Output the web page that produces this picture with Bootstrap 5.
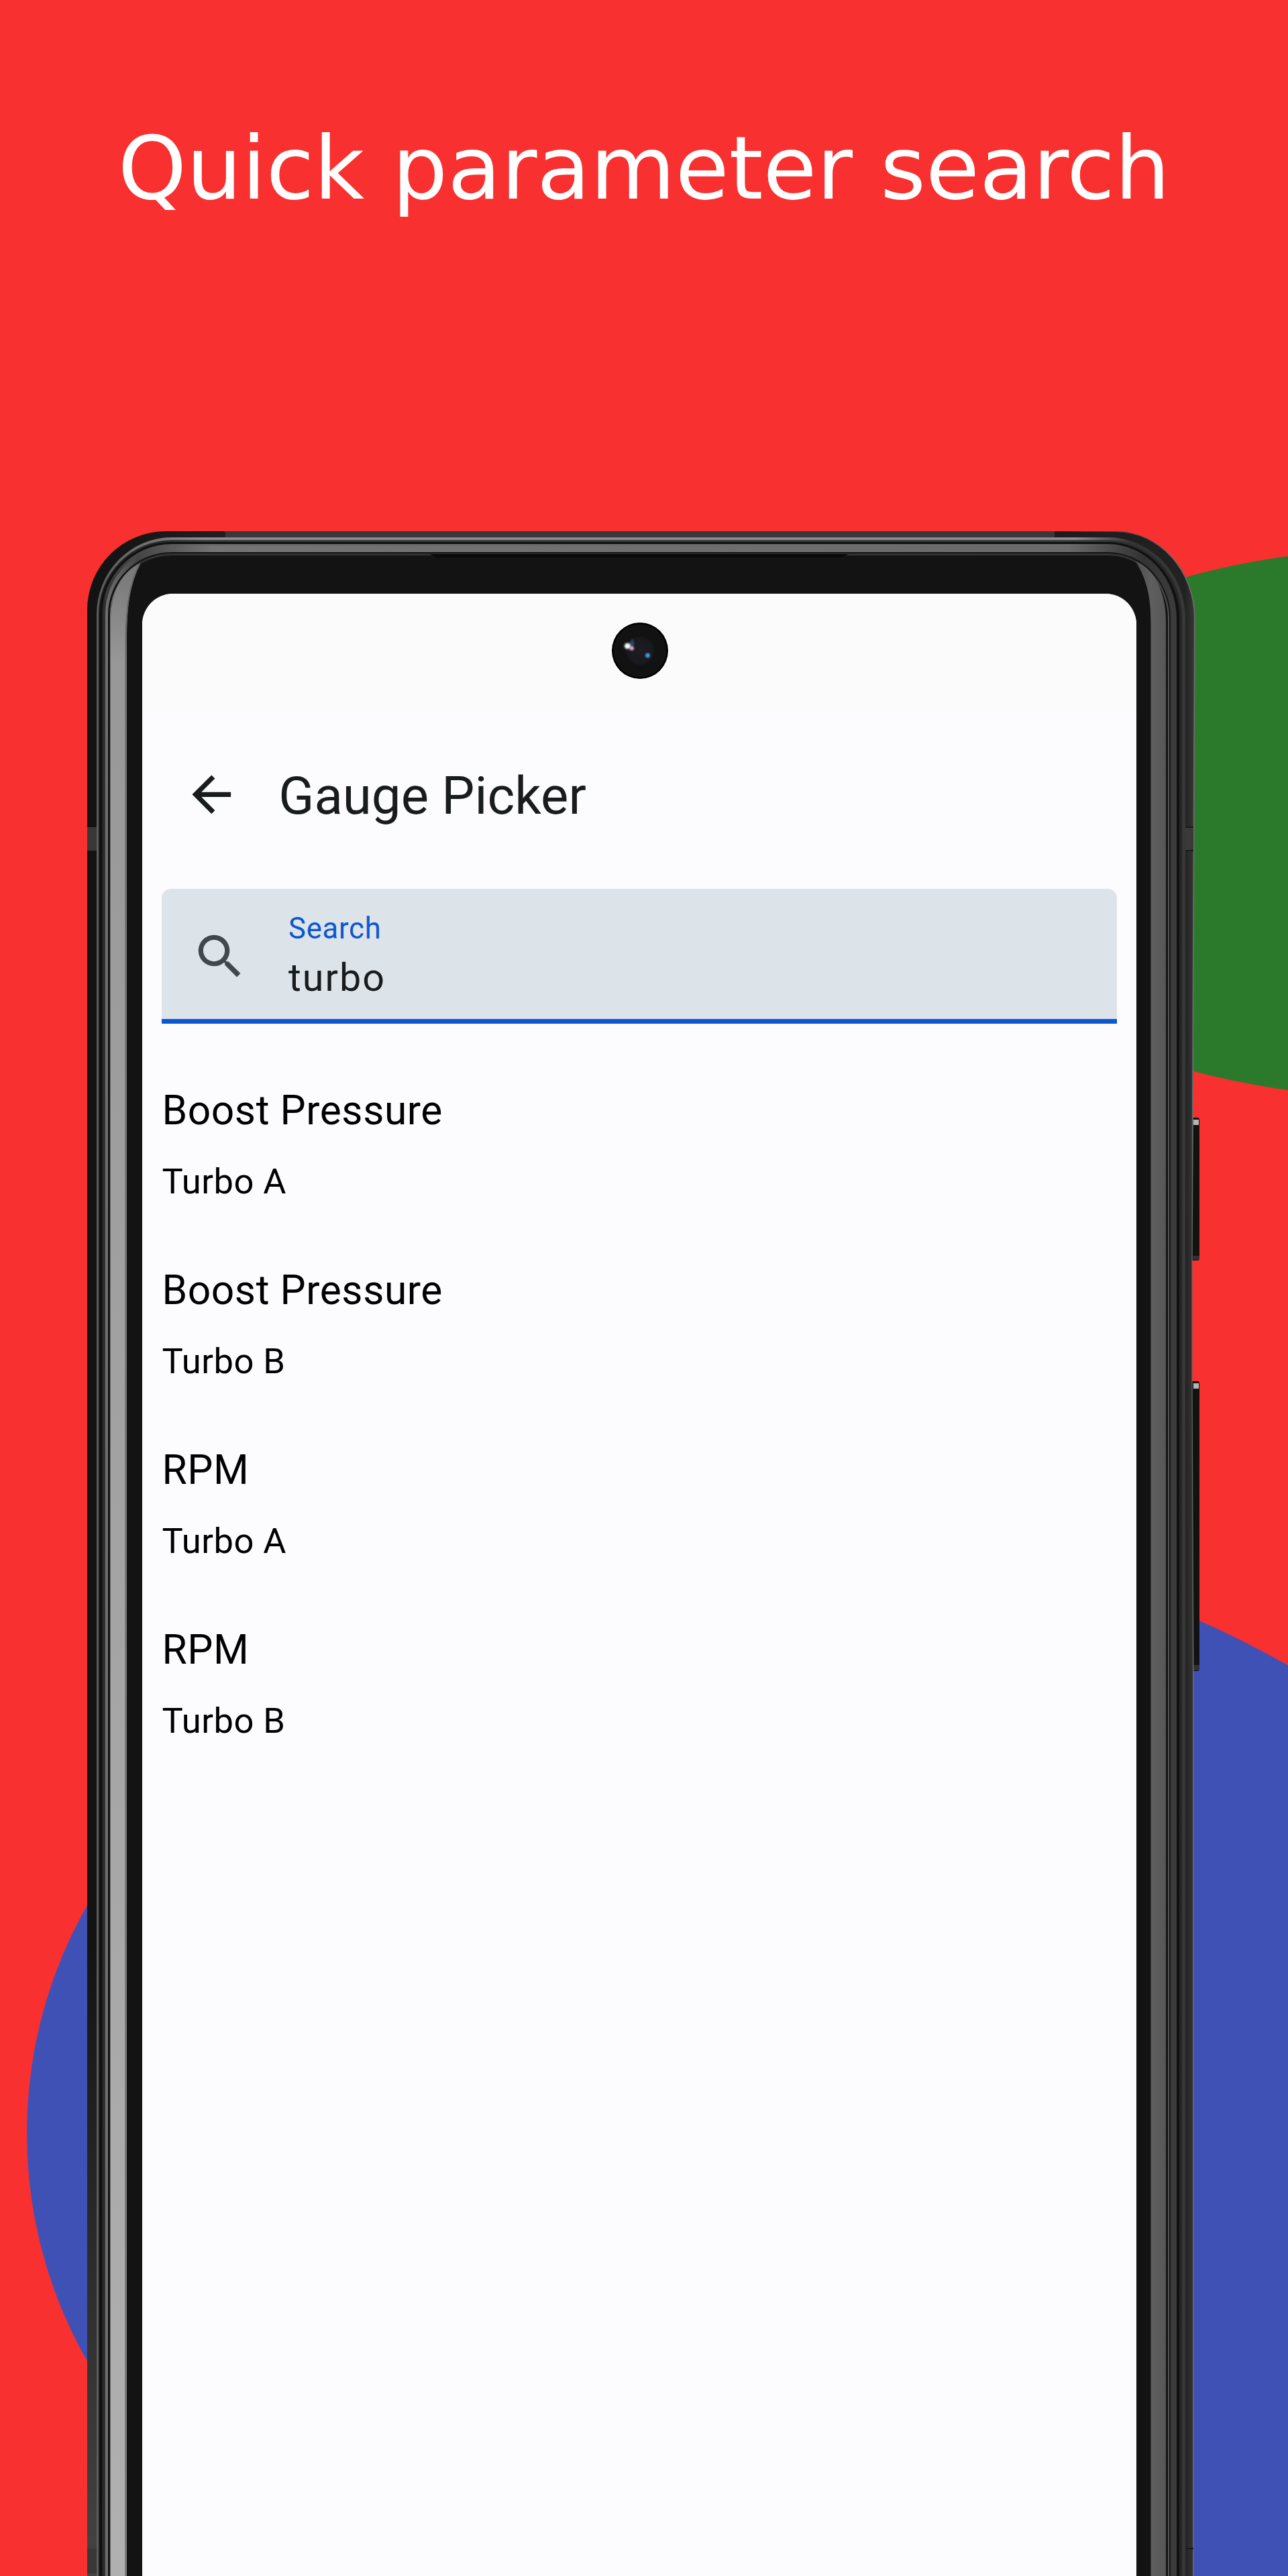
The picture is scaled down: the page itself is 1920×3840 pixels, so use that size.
<!DOCTYPE html>
<html lang="en">
<head>
<meta charset="utf-8">
<meta name="viewport" content="width=device-width, initial-scale=1">
<title>Quick parameter search</title>
<link href="https://cdn.jsdelivr.net/npm/bootstrap@5.3.0/dist/css/bootstrap.min.css" rel="stylesheet">
<style>
body{width:1920px;height:3840px;background:#f83030;font-family:Roboto,sans-serif;color:#000}
.promo{width:1920px;height:3840px}
.art{left:0;top:0;width:1920px;height:3840px}
.headline{height:792px;padding-top:176px;font:400 130px/150px "DejaVu Sans",sans-serif;color:#fff;white-space:nowrap}
.device{height:3048px;padding:93px 226px 0 212px}
.screen{height:2955px;border-radius:46px 46px 0 0;background:#fcfcff}
.statusbar{height:178px;background:#fbfbfb}
.camera{width:84px;height:84px;left:699.7px;top:43px}
.topbar{height:247px;padding-left:59.7px}
.topbar svg{margin-bottom:5px}
.topbar h2{font-size:78px;line-height:100px;color:#191c1e;margin-left:57px}
.field{margin:15px 29.5px 0 29px;height:200.5px;background:#dce3e9;border-radius:14px 14px 0 0;border-bottom:7px solid #0b57d0;padding:30px 0 0 43.5px}
.field svg{margin-top:28px}
.field-text{margin-left:59.5px}
.field label{font-size:43.5px;line-height:60px;letter-spacing:.8px;color:#0b57d0}
.field .value{font-size:57.5px;line-height:86px;letter-spacing:2px;color:#191c1e}
.results{margin:85.5px 29.5px 0}
.result{height:268px}
.result h3{font-size:60.5px;line-height:90px;letter-spacing:.55px;margin-bottom:25px}
.result p{font-size:52.5px;line-height:70px;letter-spacing:.45px}
</style>
<script src="https://cdn.jsdelivr.net/npm/bootstrap@5.3.0/dist/js/bootstrap.bundle.min.js"></script>
</head>
<body class="m-0 overflow-hidden">
<main class="promo position-relative overflow-hidden">
<svg class="art position-absolute" viewBox="0 0 1920 3840" aria-hidden="true">
  <defs>
    <linearGradient id="g0" gradientUnits="userSpaceOnUse" x1="0" y1="0" x2="1920" y2="0"><stop offset=".174" stop-color="#131313"/><stop offset=".174" stop-color="#333"/><stop offset=".819" stop-color="#333"/><stop offset=".819" stop-color="#1a1a1a"/><stop offset=".91" stop-color="#6a6a6a"/></linearGradient>
    <linearGradient id="g1" gradientUnits="userSpaceOnUse" x1="0" y1="0" x2="1920" y2="0"><stop offset=".08" stop-color="#131313"/><stop offset=".175" stop-color="#202020"/><stop offset=".175" stop-color="#383838"/><stop offset=".819" stop-color="#383838"/><stop offset=".819" stop-color="#1b1b1b"/><stop offset=".92" stop-color="#222"/><stop offset=".927" stop-color="#363636"/></linearGradient>
    <linearGradient id="g2" gradientUnits="userSpaceOnUse" x1="144" y1="0" x2="1767" y2="0"><stop offset="0" stop-color="#5c5c5c"/><stop offset=".1" stop-color="#8a8a8a"/><stop offset=".9" stop-color="#8a8a8a"/><stop offset=".95" stop-color="#333"/><stop offset="1" stop-color="#383838"/></linearGradient>
    <linearGradient id="g3" gradientUnits="userSpaceOnUse" x1="144" y1="0" x2="1767" y2="0"><stop offset="0" stop-color="#1a1a1a"/><stop offset=".1" stop-color="#383838"/><stop offset=".9" stop-color="#383838"/><stop offset="1" stop-color="#242424"/></linearGradient>
    <linearGradient id="g5" gradientUnits="userSpaceOnUse" x1="152" y1="0" x2="1754" y2="0"><stop offset="0" stop-color="#222"/><stop offset=".004" stop-color="#383838"/><stop offset=".1" stop-color="#6c6c6c"/><stop offset=".9" stop-color="#6c6c6c"/><stop offset=".97" stop-color="#333"/><stop offset="1" stop-color="#3a3a3a"/></linearGradient>
    <linearGradient id="g6" gradientUnits="userSpaceOnUse" x1="157" y1="0" x2="1752" y2="0"><stop offset="0" stop-color="#707070"/><stop offset=".03" stop-color="#444"/><stop offset=".1" stop-color="#747474"/><stop offset=".9" stop-color="#6a6a6a"/><stop offset=".97" stop-color="#333"/><stop offset="1" stop-color="#3c3c3c"/></linearGradient>
    <linearGradient id="g8" gradientUnits="userSpaceOnUse" x1="164" y1="0" x2="1743" y2="0"><stop offset="0" stop-color="#777"/><stop offset=".03" stop-color="#333"/><stop offset=".97" stop-color="#333"/><stop offset="1" stop-color="#555"/></linearGradient>
    <linearGradient id="silver" x1="0" y1="0" x2="0" y2="1"><stop offset="0" stop-color="#777"/><stop offset=".05" stop-color="#989898"/><stop offset=".6" stop-color="#a6a6a6"/><stop offset="1" stop-color="#b0b0b0"/></linearGradient>
    <linearGradient id="steel" x1="0" y1="0" x2="1" y2="0"><stop offset="0" stop-color="#505050"/><stop offset=".5" stop-color="#5e5e5e"/><stop offset="1" stop-color="#575757"/></linearGradient>
    <linearGradient id="fade" x1="0" y1="0" x2="0" y2="1"><stop offset="0" stop-color="#444" stop-opacity="0"/><stop offset="1" stop-color="#444"/></linearGradient>
  </defs>
  <ellipse cx="2079" cy="1227" rx="707" ry="408.4" fill="#2b7a2b"/>
  <path d="M1750 2399.6A1500 1500 0 0 1 1920 2482.5V3840H1750Z" fill="#4051b5"/>
  <circle cx="727" cy="3180" r="687" fill="#4051b5"/>
  <path d="M1775 1666h10q3 0 3 4v206q0 3-3 3h-10zM1775 2059h10q3 0 3 4v424q0 4-3 4h-10z" fill="#121212"/>
  <path d="M1779 1669h8v8h-8zM1779 2062h8v8h-8z" fill="#b5b5b5"/>
  <path d="M1778 1872h10v6h-10zM1778 2482h10v8h-10z" fill="#303030"/>
  <path d="M130 3840V909A117 117 0 0 1 247 792H1664A118 130 0 0 1 1782 922L1779 1640 1777.5 1900V2050L1779.500 2500V3840Z" fill="url(#g0)"/>
  <path d="M131 3840V909A116 116 0 0 1 247 793H1664A116 129 0 0 1 1780 922L1777 1640 1776.500 1900V2050L1778 2500V3840Z" fill="url(#g1)"/>
  <rect x="130" y="2900" width="14" height="940" fill="url(#fade)"/>
  <path d="M130 1233h15v35h-15zM130 3799h15v37h-15z" fill="#383838"/>
  <path d="M1762 1234h17v33h-17z" fill="#3a3a3a"/><path d="M1762 1232h17v2h-17zM1762 1267h17v2h-17zM1762 3798h17v2h-17z" fill="#191919"/>
  <path d="M144 3840V916A112 115 0 0 1 256 801H1652A115 121 0 0 1 1767 922V3840Z" fill="url(#g2)"/>
  <path d="M147 3840V916A109 111 0 0 1 256 805H1652A110 117 0 0 1 1762 922V3840Z" fill="url(#g3)"/>
  <path d="M149 3840V916A107 108 0 0 1 256 808H1652A106 114 0 0 1 1758 922V3840Z" fill="#101010"/>
  <path d="M152 3840V916A104 105 0 0 1 256 811H1652A102 111 0 0 1 1754 922V3840Z" fill="url(#g5)"/>
  <path d="M157 3840V916A99 102 0 0 1 256 814H1652A100 108 0 0 1 1752 922V3840Z" fill="url(#g6)"/>
  <path d="M161 3840V916A95 93 0 0 1 256 823H1652A93 99 0 0 1 1745 922V3840Z" fill="#131313"/>
  <path d="M164 3840V916A92 91 0 0 1 256 825H1652A91 97 0 0 1 1743 922V3840Z" fill="url(#g8)"/>
  <path d="M165.500 3840V916A90.500 88 0 0 1 256 828H1652A89 94 0 0 1 1741 922V3840Z" fill="#131313"/>
  <path d="M640 826H1265L1255 831H652Z" fill="#0a0a0a"/>
  <path d="M208.500 840C180 853 165 885 165 925V3840H189V960C189 905 193 870 208.500 840Z" fill="url(#silver)"/>
  <path d="M187.500 3840V960C187.500 905 193 870 208.500 840" fill="none" stroke="#666" stroke-width="2"/>
  <path d="M1693 837C1722 848 1738 885 1738 925V3840H1715.500V930C1715.500 890 1710 865 1693 837Z" fill="url(#steel)"/>
</svg>
<h1 class="headline position-relative m-0 text-center">Quick parameter search</h1>
<section class="device position-relative">
  <div class="screen position-relative overflow-hidden">
    <div class="statusbar"></div>
    <svg class="camera position-absolute" viewBox="0 0 84 84" aria-hidden="true">
      <defs><filter id="soft" x="-1" y="-1" width="3" height="3"><feGaussianBlur stdDeviation="1.3"/></filter>
      <radialGradient id="lens"><stop offset="0" stop-color="#1f1c22"/><stop offset="1" stop-color="#17181d"/></radialGradient></defs>
      <circle cx="42" cy="42" r="42" fill="#000"/><circle cx="42" cy="42" r="39.500" fill="#121212"/>
      <circle cx="42" cy="42" r="21" fill="url(#lens)"/>
      <g filter="url(#soft)"><path d="M23 35L31 24l3 8-7 10z" fill="#294866"/><circle cx="23" cy="35" r="5" fill="#778173"/><circle cx="23.500" cy="35" r="3.500" fill="#fff"/><circle cx="30" cy="38.500" r="3" fill="#e3a3d4"/><circle cx="53.500" cy="49" r="3.500" fill="#3d9be8"/></g>
    </svg>
    <header class="topbar d-flex align-items-center">
      <svg width="86.600" height="86.600" viewBox="0 0 24 24" fill="#191c1e" aria-label="Back"><path d="M20 11H7.830l5.590-5.590L12 4l-8 8 8 8 1.410-1.410L7.830 13H20v-2z"/></svg>
      <h2 class="fw-normal mb-0">Gauge Picker</h2>
    </header>
    <div class="field d-flex">
      <svg width="86" height="86" viewBox="0 0 24 24" fill="#41484d" aria-hidden="true"><path d="M15.500 14h-.79l-.28-.27A6.471 6.471 0 0 0 16 9.500 6.500 6.500 0 1 0 9.500 16c1.610 0 3.090-.59 4.230-1.570l.27.28v.79l5 4.990L20.490 19l-4.990-5zm-6 0C7.010 14 5 11.990 5 9.500S7.010 5 9.500 5 14 7.010 14 9.500 11.990 14 9.500 14z"/></svg>
      <div class="field-text d-flex flex-column"><label>Search</label><div class="value">turbo</div></div>
    </div>
    <div class="results">
      <div class="result"><h3 class="fw-normal">Boost Pressure</h3><p class="mb-0">Turbo A</p></div>
      <div class="result"><h3 class="fw-normal">Boost Pressure</h3><p class="mb-0">Turbo B</p></div>
      <div class="result"><h3 class="fw-normal">RPM</h3><p class="mb-0">Turbo A</p></div>
      <div class="result"><h3 class="fw-normal">RPM</h3><p class="mb-0">Turbo B</p></div>
    </div>
  </div>
</section>
</main>
</body>
</html>
